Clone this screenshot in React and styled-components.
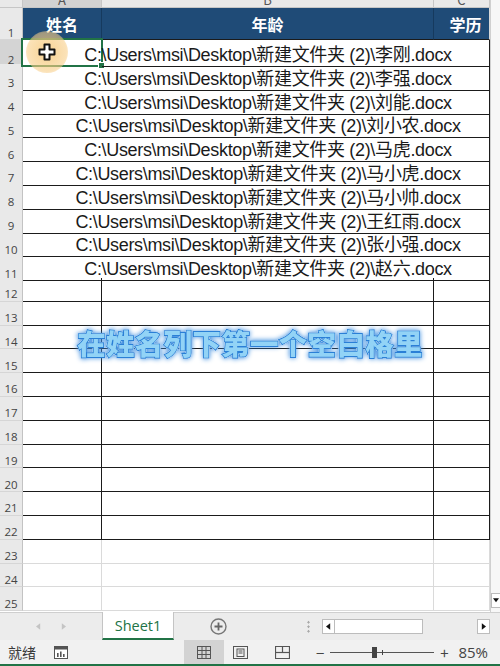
import React from "react";
import styled, { createGlobalStyle } from "styled-components";

const GlobalStyle = createGlobalStyle`
  html, body { margin: 0; padding: 0; background: #fff; }
  body { font-family: "Noto Sans CJK SC", "Noto Sans", sans-serif; }
  * { box-sizing: border-box; }
`;

const GREEN = "#217346";
const NAVY = "#1f4b77";
const DARK = "#1b1b1b";

const Page = styled.div`
  width: 500px;
  height: 666px;
  display: flex;
  flex-direction: column;
  overflow: hidden;
  background: #fff;
`;

const SheetArea = styled.div`
  position: relative;
  display: flex;
  height: 612px;
`;

const Grid = styled.div`
  width: 490px;
  display: flex;
  flex-direction: column;
`;

const Row = styled.div`
  display: grid;
  grid-template-columns: 23px 79px 332px 56px;
  height: ${(p) => p.$h}px;
  flex-shrink: 0;
`;

const ColHead = styled.div`
  display: flex;
  align-items: flex-end;
  justify-content: center;
  overflow: hidden;
  background: ${(p) => (p.$active ? "#d2d2d2" : "#e9e9e9")};
  border-right: 1px solid #c6c6c6;
  border-bottom: 1px solid #c6c6c6;
  color: #555;
  font-size: 13px;
  span {
    line-height: 14px;
    height: 14px;
    flex-shrink: 0;
  }
`;

const RowHead = styled.div`
  display: flex;
  align-items: flex-end;
  justify-content: center;
  padding-bottom: 1px;
  background: ${(p) => (p.$active ? "#d4d4d4" : "#e9e9e9")};
  border-right: 1px solid #c3c3c3;
  border-bottom: 1px solid #d6d6d6;
  color: #444;
  font-family: "Open Sans", "Noto Sans", sans-serif;
  font-size: 11.5px;
  line-height: 1;
`;

const HeadCell = styled.div`
  display: flex;
  align-items: center;
  justify-content: center;
  background: ${NAVY};
  color: #fff;
  font-weight: 700;
  font-size: 16px;
  border-right: 1px solid ${(p) => (p.$last ? "#d8d8d8" : "#163a5e")};
  border-bottom: 1.5px solid ${DARK};
  padding-left: ${(p) => p.$pl || 0}px;
`;

const Cell = styled.div`
  position: relative;
  display: flex;
  align-items: center;
  justify-content: center;
  white-space: nowrap;
  font-family: "Liberation Sans", "Noto Sans CJK SC", sans-serif;
  font-size: 18px;
  letter-spacing: -0.33px;
  color: #1a1a1a;
  border-bottom: ${(p) =>
    p.$light ? "1px solid #dadada" : `1.5px solid ${DARK}`};
  border-right: ${(p) =>
    p.$edge
      ? p.$light
        ? "1px solid #dadada"
        : `1.5px solid ${DARK}`
      : "none"};
`;

const Selection = styled.div`
  position: absolute;
  left: -2px;
  top: -2px;
  right: -1px;
  bottom: -1px;
  border: 2px solid ${GREEN};
  pointer-events: none;
  &::after {
    content: "";
    position: absolute;
    right: -4px;
    bottom: -4px;
    width: 5px;
    height: 5px;
    background: ${GREEN};
    border: 1px solid #fff;
  }
`;

const Spot = styled.div`
  position: absolute;
  left: 26px;
  top: 31px;
  width: 42px;
  height: 42px;
  border-radius: 50%;
  background: radial-gradient(
    circle,
    rgba(246, 200, 120, 0.8) 0%,
    rgba(248, 206, 135, 0.6) 65%,
    rgba(250, 215, 150, 0) 100%
  );
  display: flex;
  align-items: center;
  justify-content: center;
  pointer-events: none;
`;

const Caption = styled.div`
  position: absolute;
  left: 0;
  right: 0;
  top: 322px;
  text-align: center;
  font-size: 28.5px;
  font-weight: 900;
  color: #92d3f6;
  -webkit-text-stroke: 1.8px #2a7fd6;
  paint-order: stroke fill;
  letter-spacing: 0.3px;
  filter: drop-shadow(0 0 0.6px #fff) drop-shadow(0 0 0.6px #fff)
    drop-shadow(0 0 2.5px #3b8de0);
  pointer-events: none;
`;

const VScroll = styled.div`
  width: 10px;
  display: flex;
  flex-direction: column;
  justify-content: flex-end;
  background: #f7f7f7;
  border-left: 1px solid #d0d0d0;
  padding-bottom: 4px;
`;

const ArrowBox = styled.div`
  width: ${(p) => p.$w || 13}px;
  height: ${(p) => p.$h || 15}px;
  display: flex;
  align-items: center;
  justify-content: center;
  background: #fff;
  border: 1px solid #bcbcbc;
  flex-shrink: 0;
`;

const TabBar = styled.div`
  height: 28px;
  display: flex;
  align-items: stretch;
  background: #ececec;
  border-top: 1px solid #cfcfcf;
`;

const TabNav = styled.div`
  width: 102px;
  display: flex;
  align-items: center;
  justify-content: center;
  gap: 20px;
`;

const Tab = styled.div`
  width: 72px;
  margin-top: -1px;
  display: flex;
  align-items: center;
  justify-content: center;
  background: #fff;
  border-left: 1px solid #c4c4c4;
  border-right: 1px solid #c4c4c4;
  border-bottom: 2px solid ${GREEN};
  color: ${GREEN};
  font-family: "Open Sans", "Noto Sans", sans-serif;
  font-size: 14.5px;
`;

const AddSheet = styled.div`
  width: 88px;
  display: flex;
  align-items: center;
  justify-content: center;
`;

const HScroll = styled.div`
  flex: 1;
  display: flex;
  align-items: center;
  padding-left: 45px;
  padding-right: 10px;
`;

const Dots = styled.div`
  width: 3px;
  height: 14px;
  margin-right: 12px;
  background: radial-gradient(circle, #a9a9a9 1px, transparent 1.3px) 0 0 /
    3px 4.5px;
`;

const Track = styled.div`
  flex: 1;
  display: flex;
  align-items: center;
  height: 15px;
`;

const Thumb = styled.div`
  width: 88px;
  height: 15px;
  background: #fff;
  border: 1px solid #bcbcbc;
  border-left: none;
`;

const Spacer = styled.div`
  flex: 1;
`;

const StatusBar = styled.div`
  height: 26px;
  display: flex;
  align-items: stretch;
  background: #f1f1f1;
  border-bottom: 2px solid ${GREEN};
  color: #3a3a3a;
`;

const Ready = styled.div`
  display: flex;
  align-items: center;
  padding-left: 8px;
  font-size: 14px;
  width: 52px;
`;

const IconSlot = styled.div`
  display: flex;
  align-items: center;
  justify-content: center;
  width: ${(p) => p.$w}px;
  background: ${(p) => (p.$on ? "#d3d3d3" : "transparent")};
`;

const Zoom = styled.div`
  display: flex;
  align-items: center;
  flex: 1;
  padding-left: 8px;
  padding-right: 12px;
  font-size: 15px;
  color: #444;
`;

const Slider = styled.div`
  position: relative;
  width: 104px;
  height: 11px;
  margin: 0 6px;
  display: flex;
  align-items: center;
  &::before {
    content: "";
    flex: 1;
    height: 1px;
    background: #555;
  }
`;

const Knob = styled.div`
  position: absolute;
  left: 42px;
  top: 0;
  width: 5px;
  height: 11px;
  background: #444;
`;

const Tick = styled.div`
  position: absolute;
  left: 52px;
  top: 3px;
  width: 1px;
  height: 5px;
  background: #444;
`;

const Percent = styled.div`
  margin-left: auto;
  font-family: "Open Sans", "Noto Sans", sans-serif;
`;

const files = [
  "李刚",
  "李强",
  "刘能",
  "刘小农",
  "马虎",
  "马小虎",
  "马小帅",
  "王红雨",
  "张小强",
  "赵六",
];

const Tri = ({ dir = "left", color = "#111", size = 6 }) => (
  <svg width={size} height={size * 1.4} viewBox="0 0 6 8">
    {dir === "left" && <path d="M5 0 L0 4 L5 8 Z" fill={color} />}
    {dir === "right" && <path d="M1 0 L6 4 L1 8 Z" fill={color} />}
    {dir === "down" && <path d="M0 2 L6 2 L3 6 Z" fill={color} />}
  </svg>
);

const CrossCursor = () => (
  <svg width="18" height="18" viewBox="0 0 18 18">
    <path
      d="M6.5 1.5h5v5h5v5h-5v5h-5v-5h-5v-5h5z"
      fill="#fff"
      stroke="#111"
      strokeWidth="2"
      strokeLinejoin="round"
    />
  </svg>
);

const MacroIcon = () => (
  <svg width="14" height="14" viewBox="0 0 14 14">
    <rect x="0.5" y="1.5" width="13" height="12" fill="#fff" stroke="#555" />
    <rect x="0.5" y="1.5" width="13" height="3" fill="#555" />
    <rect x="3" y="8" width="1.6" height="4" fill="#555" />
    <rect x="6" y="6.5" width="1.6" height="5.5" fill="#555" />
    <rect x="9" y="9" width="1.6" height="3" fill="#555" />
  </svg>
);

const NormalViewIcon = () => (
  <svg width="14" height="13" viewBox="0 0 14 13">
    <g fill="none" stroke="#555" strokeWidth="1">
      <rect x="0.5" y="0.5" width="13" height="12" />
      <line x1="5" y1="0.5" x2="5" y2="12.5" />
      <line x1="9" y1="0.5" x2="9" y2="12.5" />
      <line x1="0.5" y1="4.5" x2="13.5" y2="4.5" />
      <line x1="0.5" y1="8.5" x2="13.5" y2="8.5" />
    </g>
  </svg>
);

const PageLayoutIcon = () => (
  <svg width="15" height="13" viewBox="0 0 15 13">
    <g fill="none" stroke="#555" strokeWidth="1">
      <rect x="0.5" y="0.5" width="14" height="12" />
      <rect x="4" y="3" width="7" height="7.5" />
      <line x1="5.5" y1="5" x2="9.5" y2="5" />
      <line x1="5.5" y1="7" x2="9.5" y2="7" />
    </g>
  </svg>
);

const PageBreakIcon = () => (
  <svg width="15" height="13" viewBox="0 0 15 13">
    <g fill="none" stroke="#555" strokeWidth="1.2">
      <path d="M0.5 0.5h14v12h-14z" />
      <line x1="7.5" y1="0.5" x2="7.5" y2="6.5" />
      <line x1="0.5" y1="6.5" x2="14.5" y2="6.5" />
    </g>
  </svg>
);

const PlusCircle = () => (
  <svg width="17" height="17" viewBox="0 0 17 17">
    <circle cx="8.5" cy="8.5" r="7.5" fill="none" stroke="#777" strokeWidth="1.4" />
    <path d="M8.5 4.5v8M4.5 8.5h8" stroke="#666" strokeWidth="1.8" />
  </svg>
);

const ROW_H = 23.8;

export default function App() {
  return (
    <Page>
      <GlobalStyle />
      <SheetArea>
        <Grid>
          <Row $h={8}>
            <ColHead />
            <ColHead $active>
              <span>A</span>
            </ColHead>
            <ColHead>
              <span>B</span>
            </ColHead>
            <ColHead>
              <span>C</span>
            </ColHead>
          </Row>
          <Row $h={32}>
            <RowHead>1</RowHead>
            <HeadCell>姓名</HeadCell>
            <HeadCell>年龄</HeadCell>
            <HeadCell $last $pl={8}>
              学历
            </HeadCell>
          </Row>
          {files.map((name, i) => (
            <Row $h={ROW_H} key={name}>
              <RowHead $active={i === 0}>{i + 2}</RowHead>
              <Cell>{i === 0 && <Selection />}</Cell>
              <Cell>
                C:\Users\msi\Desktop\新建文件夹 (2)\{name}.docx
              </Cell>
              <Cell $edge />
            </Row>
          ))}
          {Array.from({ length: 11 }, (_, i) => (
            <Row $h={ROW_H} key={`b${i}`}>
              <RowHead>{i + 12}</RowHead>
              <Cell $edge />
              <Cell $edge />
              <Cell $edge />
            </Row>
          ))}
          {Array.from({ length: 3 }, (_, i) => (
            <Row $h={ROW_H} key={`e${i}`}>
              <RowHead>{i + 23}</RowHead>
              <Cell $edge $light />
              <Cell $edge $light />
              <Cell $edge $light />
            </Row>
          ))}
        </Grid>
        <VScroll>
          <ArrowBox $w={10} $h={15}>
            <Tri dir="down" size={6} />
          </ArrowBox>
        </VScroll>
        <Spot>
          <CrossCursor />
        </Spot>
        <Caption>在姓名列下第一个空白格里</Caption>
      </SheetArea>

      <TabBar>
        <TabNav>
          <Tri dir="left" color="#c4c4c4" size={5} />
          <Tri dir="right" color="#c4c4c4" size={5} />
        </TabNav>
        <Tab>Sheet1</Tab>
        <AddSheet>
          <PlusCircle />
        </AddSheet>
        <HScroll>
          <Dots />
          <Track>
            <ArrowBox>
              <Tri dir="left" size={5} />
            </ArrowBox>
            <Thumb />
            <Spacer />
            <ArrowBox>
              <Tri dir="right" size={5} />
            </ArrowBox>
          </Track>
        </HScroll>
      </TabBar>

      <StatusBar>
        <Ready>就绪</Ready>
        <IconSlot $w={18}>
          <MacroIcon />
        </IconSlot>
        <IconSlot $w={114} />
        <IconSlot $w={40} $on>
          <NormalViewIcon />
        </IconSlot>
        <IconSlot $w={32}>
          <PageLayoutIcon />
        </IconSlot>
        <IconSlot $w={52}>
          <PageBreakIcon />
        </IconSlot>
        <Zoom>
          <span>−</span>
          <Slider>
            <Knob />
            <Tick />
          </Slider>
          <span>+</span>
          <Percent>85%</Percent>
        </Zoom>
      </StatusBar>
    </Page>
  );
}
